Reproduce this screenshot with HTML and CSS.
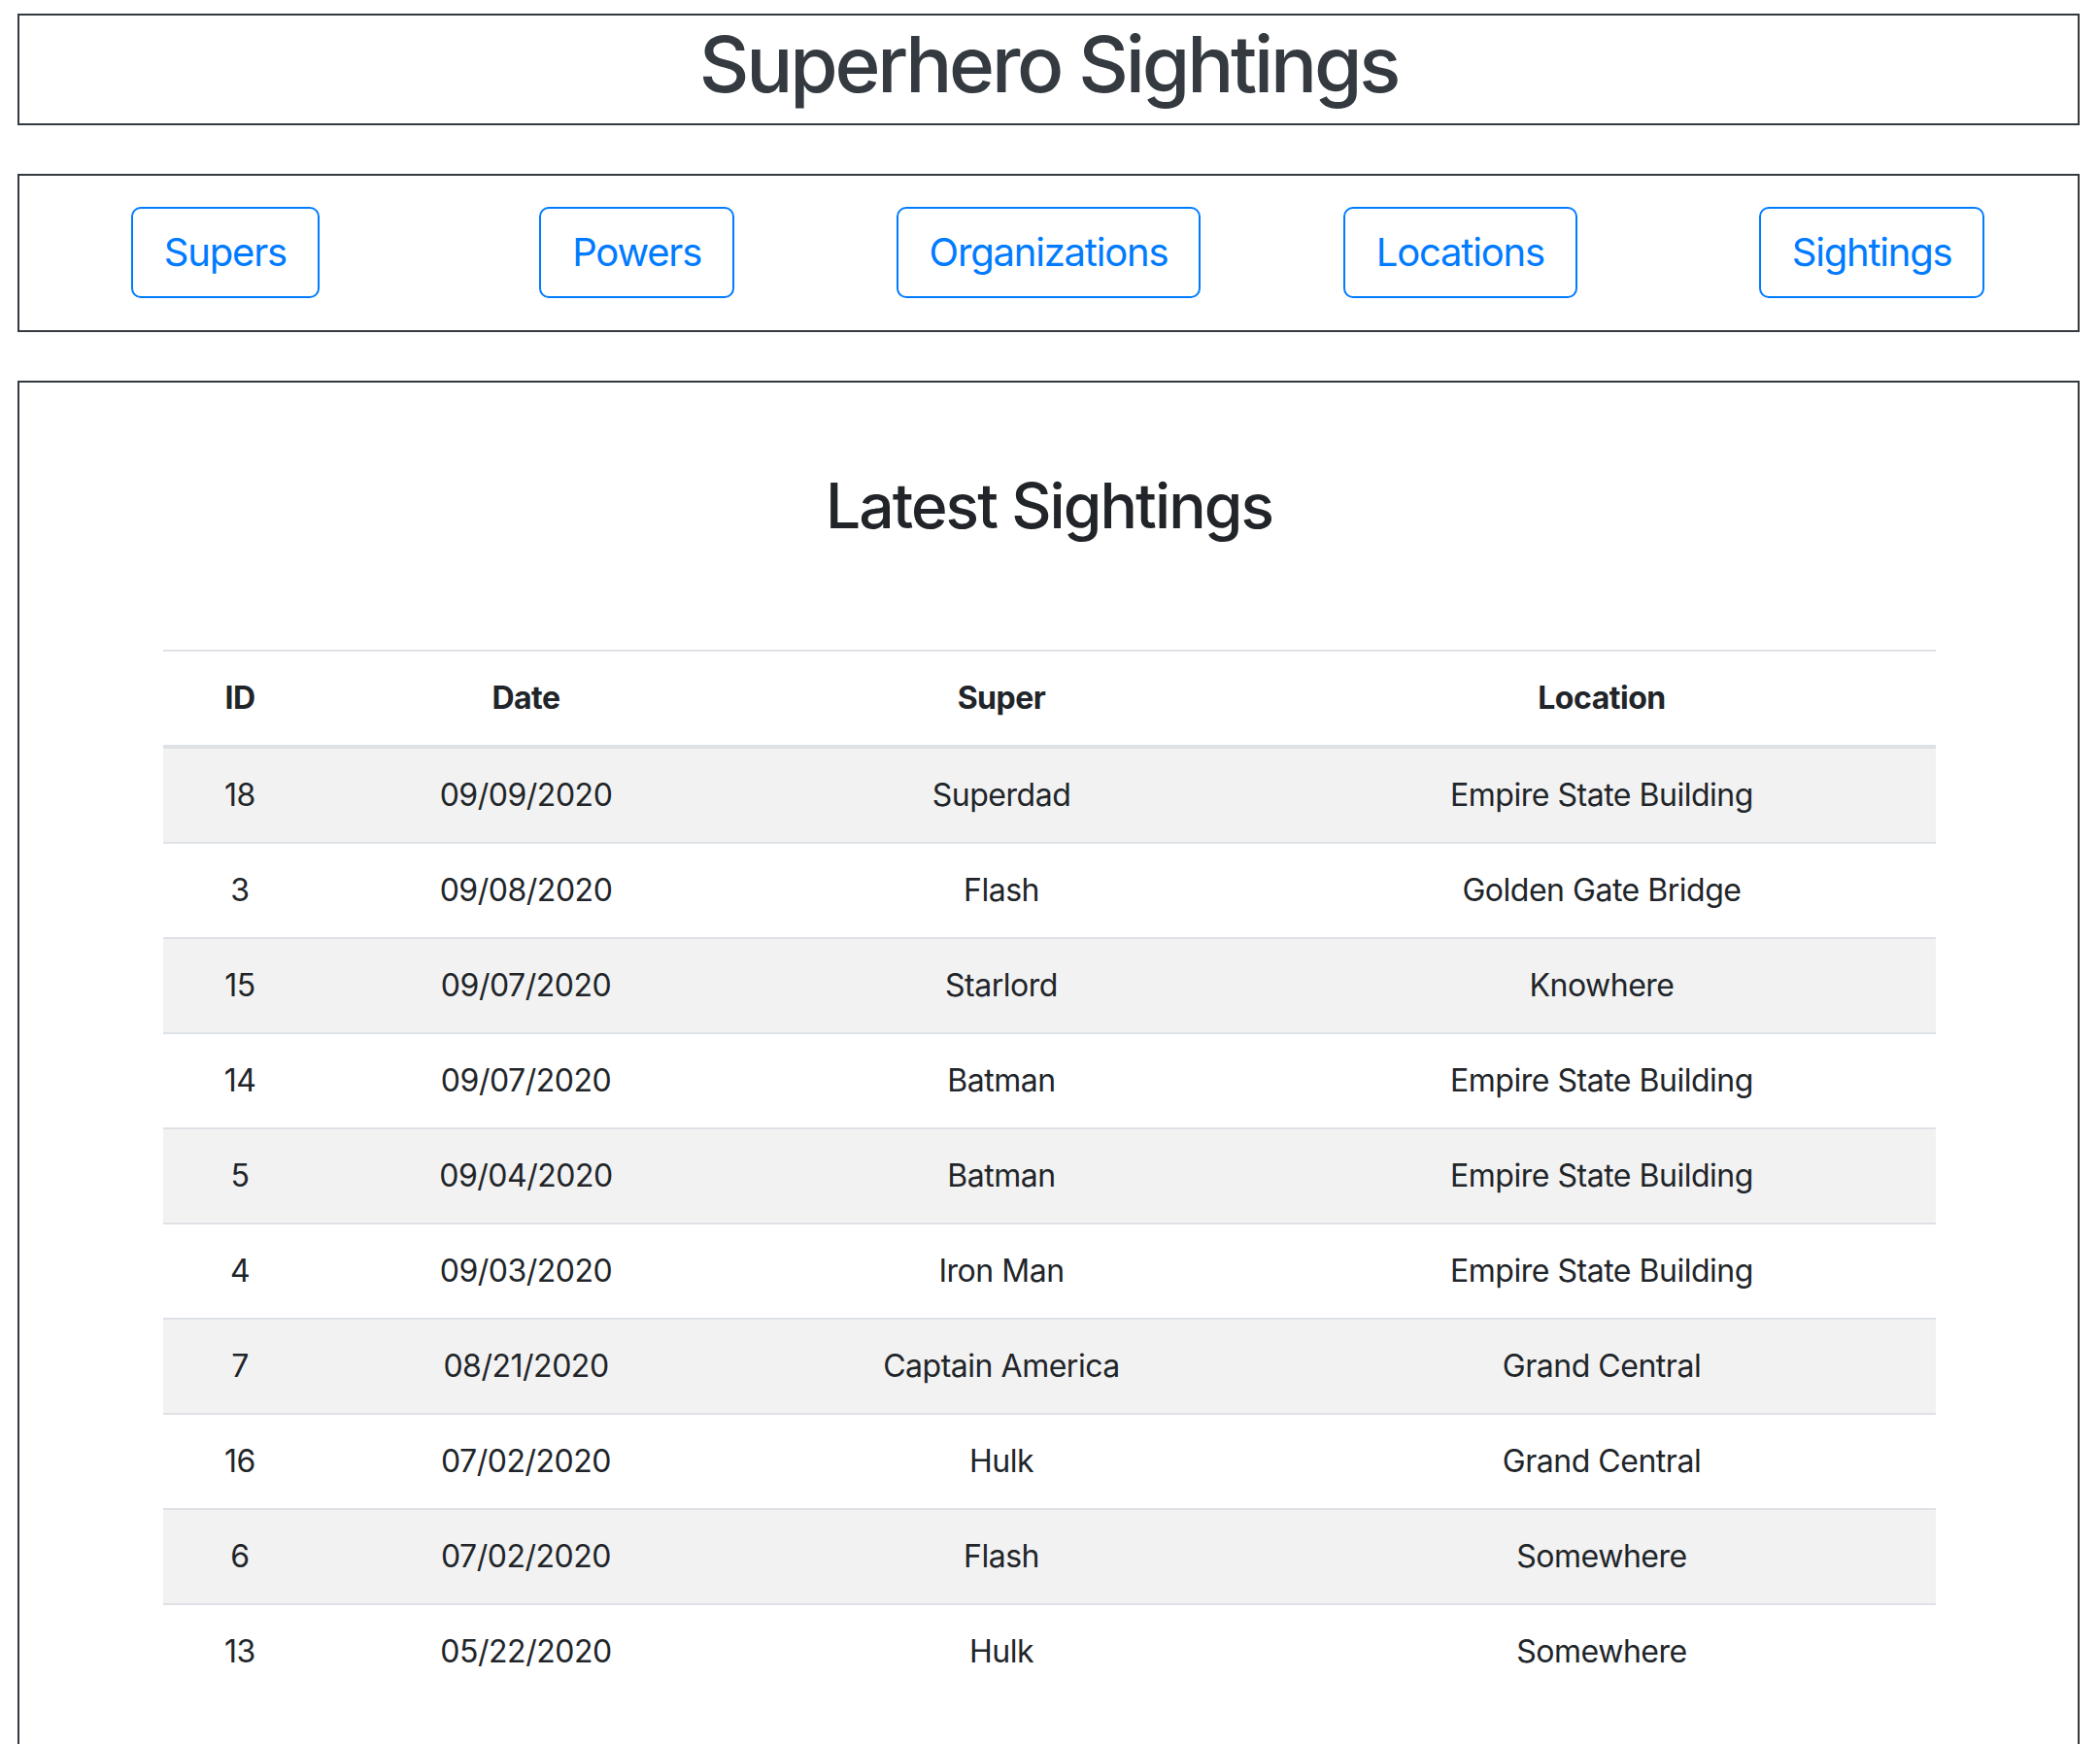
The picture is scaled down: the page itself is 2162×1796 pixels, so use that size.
FILE: index.html
```html
<!DOCTYPE html>
<html lang="en">
<head>
<meta charset="utf-8">
<title>Superhero Sightings</title>
<link rel="stylesheet" href="styles.css">
</head>
<body>
<div class="page">
  <header class="panel header">
    <h1 class="title">Superhero Sightings</h1>
  </header>
  <nav class="panel nav">
    <div class="nav-cell"><a class="btn" href="#">Supers</a></div>
    <div class="nav-cell"><a class="btn" href="#">Powers</a></div>
    <div class="nav-cell"><a class="btn" href="#">Organizations</a></div>
    <div class="nav-cell"><a class="btn" href="#">Locations</a></div>
    <div class="nav-cell"><a class="btn" href="#">Sightings</a></div>
  </nav>
  <main class="panel main">
    <h2 class="heading">Latest Sightings</h2>
    <table class="table">
      <colgroup>
        <col class="c-id"><col class="c-date"><col class="c-super"><col class="c-loc">
      </colgroup>
      <thead>
        <tr><th>ID</th><th>Date</th><th>Super</th><th>Location</th></tr>
      </thead>
      <tbody>
        <tr><td>18</td><td>09/09/2020</td><td>Superdad</td><td>Empire State Building</td></tr>
        <tr><td>3</td><td>09/08/2020</td><td>Flash</td><td>Golden Gate Bridge</td></tr>
        <tr><td>15</td><td>09/07/2020</td><td>Starlord</td><td>Knowhere</td></tr>
        <tr><td>14</td><td>09/07/2020</td><td>Batman</td><td>Empire State Building</td></tr>
        <tr><td>5</td><td>09/04/2020</td><td>Batman</td><td>Empire State Building</td></tr>
        <tr><td>4</td><td>09/03/2020</td><td>Iron Man</td><td>Empire State Building</td></tr>
        <tr><td>7</td><td>08/21/2020</td><td>Captain America</td><td>Grand Central</td></tr>
        <tr><td>16</td><td>07/02/2020</td><td>Hulk</td><td>Grand Central</td></tr>
        <tr><td>6</td><td>07/02/2020</td><td>Flash</td><td>Somewhere</td></tr>
        <tr><td>13</td><td>05/22/2020</td><td>Hulk</td><td>Somewhere</td></tr>
      </tbody>
    </table>
  </main>
</div>
</body>
</html>
```
FILE: styles.css
```css
html, body {
  margin: 0;
  padding: 0;
  background: #ffffff;
}
body {
  font-family: Inter, "Liberation Sans", Arial, sans-serif;
  font-size: 32px;
  line-height: 48px;
  letter-spacing: -0.015em;
  color: #212529;
}
.page {
  width: 2123px;
  margin: 0 0 0 18px;
  padding-top: 14px;
  display: flex;
  flex-direction: column;
  gap: 50px;
}
.panel {
  border: 2px solid #343a40;
}
.header {
  padding: 2px 0 13px;
}
.title {
  margin: 0;
  font-size: 80px;
  line-height: 96px;
  font-weight: 500;
  letter-spacing: -0.04em;
  text-align: center;
  color: #343a40;
}
.nav {
  display: grid;
  grid-template-columns: repeat(5, 1fr);
  padding: 32px 0 33px;
}
.nav-cell {
  display: flex;
  justify-content: center;
}
.btn {
  display: inline-block;
  border: 2px solid #007bff;
  border-radius: 10px;
  padding: 16px 32px;
  font-size: 40px;
  line-height: 58px;
  letter-spacing: -0.03em;
  color: #007bff;
  text-decoration: none;
}
.main {
  padding: 88px 147px 200px 148px;
}
.heading {
  margin: 0 0 110px;
  font-size: 64px;
  line-height: 77px;
  font-weight: 500;
  letter-spacing: -0.03em;
  text-align: center;
  color: #212529;
}
.table {
  width: 100%;
  border-collapse: collapse;
  table-layout: fixed;
}
.c-id { width: 158px; }
.c-date { width: 431px; }
.c-super { width: 548px; }
.c-loc { width: 688px; }
.table th,
.table td {
  padding: 24px;
  text-align: center;
  border-top: 2px solid #dee2e6;
  vertical-align: top;
}
.table th {
  font-weight: 700;
}
.table thead th {
  border-bottom: 4px solid #dee2e6;
}
.table tbody tr:nth-child(odd) {
  background: #f2f2f2;
}
.table tbody tr:first-child td {
  border-top: 0;
}
```
